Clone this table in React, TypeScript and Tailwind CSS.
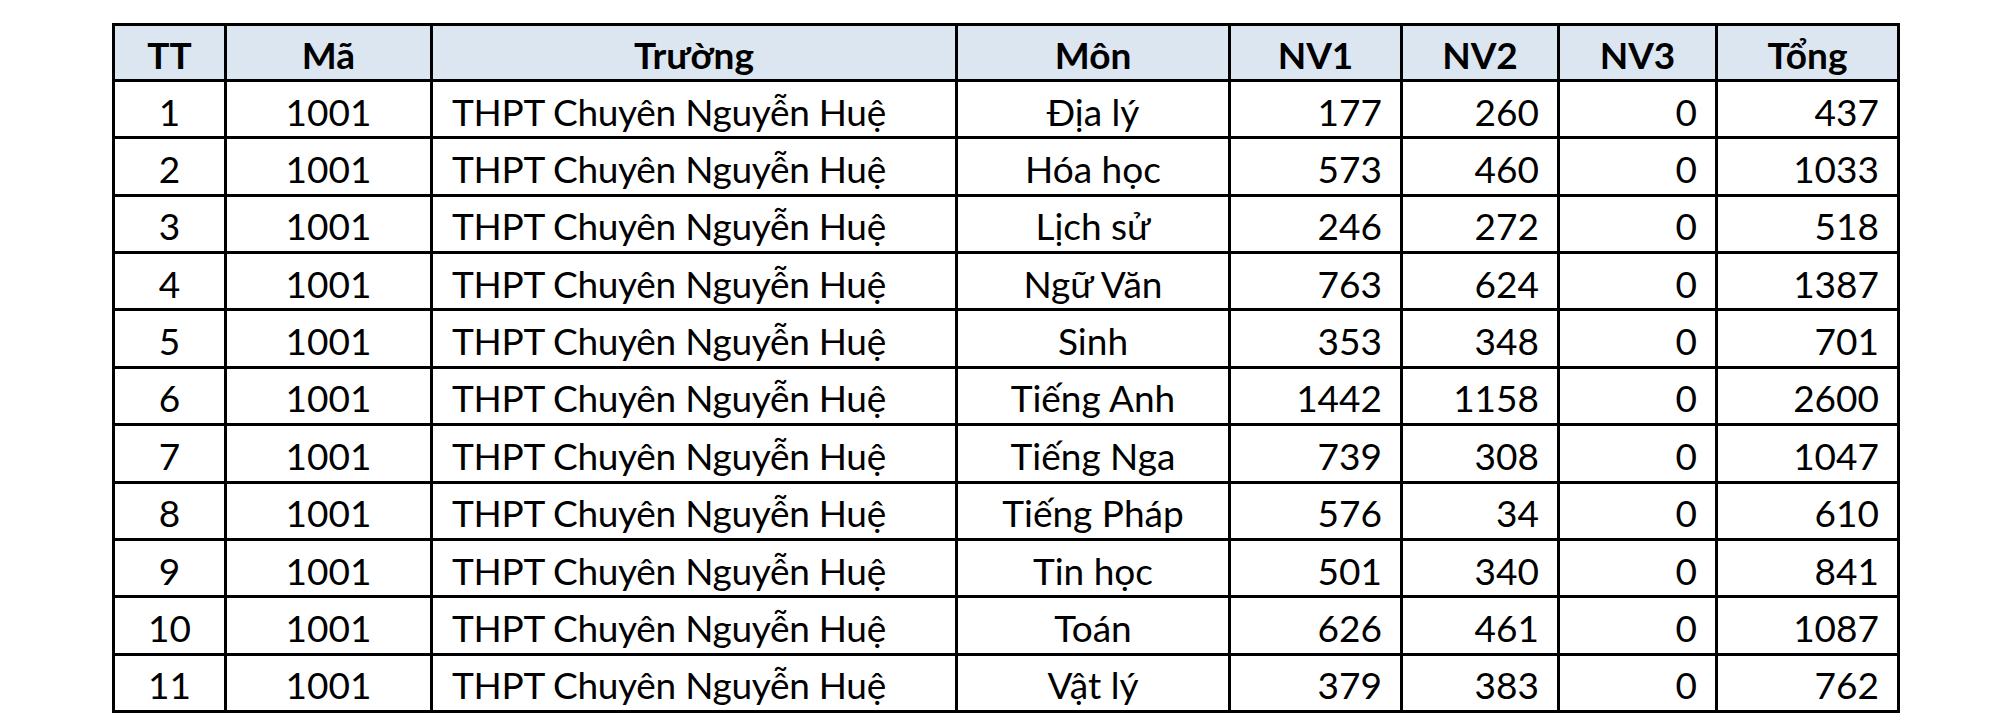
import React from "react";

const rows: [string, string, string, string, string, string, string, string][] = [
  ["1", "1001", "THPT Chuyên Nguyễn Huệ", "Địa lý", "177", "260", "0", "437"],
  ["2", "1001", "THPT Chuyên Nguyễn Huệ", "Hóa học", "573", "460", "0", "1033"],
  ["3", "1001", "THPT Chuyên Nguyễn Huệ", "Lịch sử", "246", "272", "0", "518"],
  ["4", "1001", "THPT Chuyên Nguyễn Huệ", "Ngữ Văn", "763", "624", "0", "1387"],
  ["5", "1001", "THPT Chuyên Nguyễn Huệ", "Sinh", "353", "348", "0", "701"],
  ["6", "1001", "THPT Chuyên Nguyễn Huệ", "Tiếng Anh", "1442", "1158", "0", "2600"],
  ["7", "1001", "THPT Chuyên Nguyễn Huệ", "Tiếng Nga", "739", "308", "0", "1047"],
  ["8", "1001", "THPT Chuyên Nguyễn Huệ", "Tiếng Pháp", "576", "34", "0", "610"],
  ["9", "1001", "THPT Chuyên Nguyễn Huệ", "Tin học", "501", "340", "0", "841"],
  ["10", "1001", "THPT Chuyên Nguyễn Huệ", "Toán", "626", "461", "0", "1087"],
  ["11", "1001", "THPT Chuyên Nguyễn Huệ", "Vật lý", "379", "383", "0", "762"],
];

const headers = ["TT", "Mã", "Trường", "Môn", "NV1", "NV2", "NV3", "Tổng"];

const align = [
  "justify-center",
  "justify-center",
  "justify-start pl-[19px] tracking-[-0.3px]",
  "justify-center",
  "justify-end pr-[18px]",
  "justify-end pr-[18px]",
  "justify-end pr-[18px]",
  "justify-end pr-[18px]",
];

export default function App() {
  return (
    <div
      className="w-[2009px] h-[722px] bg-white pt-[23px] pl-[112px] text-black"
      style={{ fontFamily: "Lato, 'Noto Sans', sans-serif" }}
    >
      <div className="grid w-max grid-cols-[112px_206px_525px_273px_172px_157px_158px_182px] border-l-[3px] border-t-[3px] border-black">
        {headers.map((h) => (
          <div
            key={h}
            className="flex h-[56px] items-center justify-center border-r-[3px] border-b-[3px] border-black bg-[#dce6f1] pt-[3px] text-[37px] font-bold leading-none"
          >
            {h}
          </div>
        ))}
        {rows.map((r, ri) =>
          r.map((c, ci) => (
            <div
              key={ri + "-" + ci}
              className={
                "flex h-[57.36px] items-center border-r-[3px] border-b-[3px] border-black pt-[4px] text-[37px] leading-none " +
                align[ci]
              }
            >
              {c}
            </div>
          ))
        )}
      </div>
    </div>
  );
}
